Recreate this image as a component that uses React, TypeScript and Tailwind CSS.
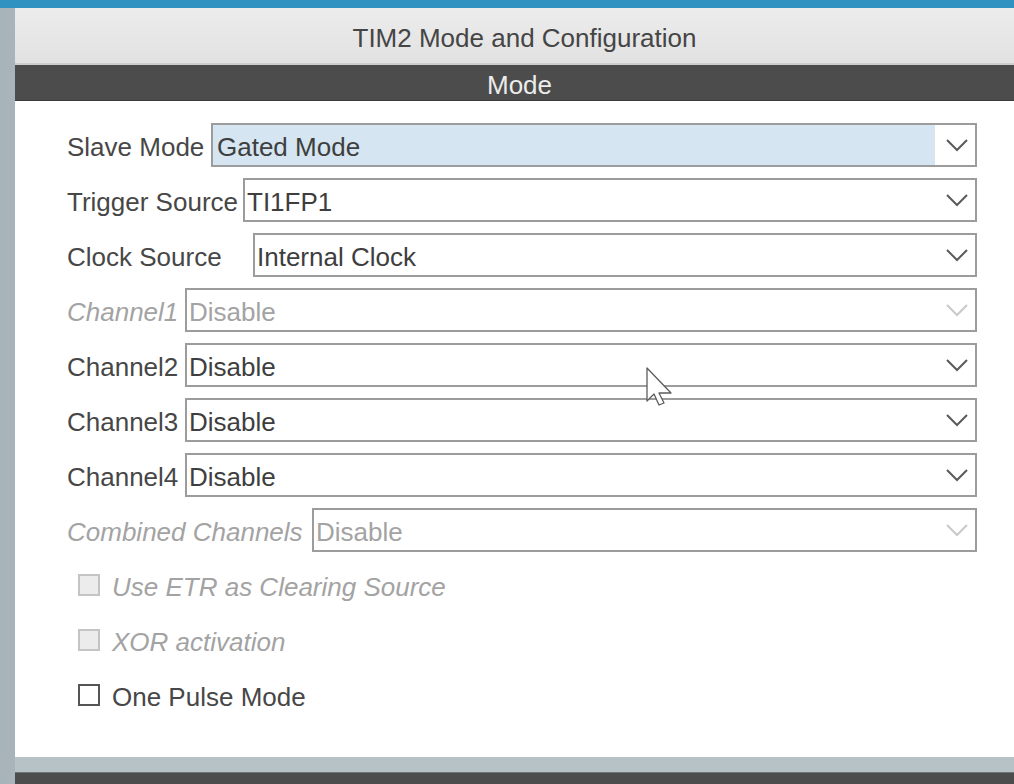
import React from 'react';

type Row = {
  label: string;
  value: string;
  labelW: string;
  disabled?: boolean;
  active?: boolean;
};

const rows: Row[] = [
  { label: 'Slave Mode', value: 'Gated Mode', labelW: 'w-[144px]', active: true },
  { label: 'Trigger Source', value: 'TI1FP1', labelW: 'w-[176px]' },
  { label: 'Clock Source', value: 'Internal Clock', labelW: 'w-[186px]' },
  { label: 'Channel1', value: 'Disable', labelW: 'w-[118px]', disabled: true },
  { label: 'Channel2', value: 'Disable', labelW: 'w-[118px]' },
  { label: 'Channel3', value: 'Disable', labelW: 'w-[118px]' },
  { label: 'Channel4', value: 'Disable', labelW: 'w-[118px]' },
  { label: 'Combined Channels', value: 'Disable', labelW: 'w-[245px]', disabled: true },
];

const checks = [
  { label: 'Use ETR as Clearing Source', disabled: true },
  { label: 'XOR activation', disabled: true },
  { label: 'One Pulse Mode', disabled: false },
];

function Chevron({ disabled }: { disabled?: boolean }) {
  return (
    <svg width="24" height="14" viewBox="0 0 24 14" fill="none">
      <polyline
        points="2,2 12,12 22,2"
        stroke={disabled ? '#c9c9c9' : '#5a5a5a'}
        strokeWidth="2"
      />
    </svg>
  );
}

function SelectRow({ row }: { row: Row }) {
  return (
    <div className="flex h-[44px] items-center">
      <div
        className={
          row.disabled
            ? `${row.labelW} shrink-0 pt-[4px] italic text-[#a3a3a3]`
            : `${row.labelW} shrink-0 pt-[4px] text-[#474747]`
        }
      >
        {row.label}
      </div>
      <div className="flex h-full flex-1 items-stretch border-2 border-[#9c9c9c] bg-white">
        <div
          className={
            row.active
              ? 'flex flex-1 items-center bg-[#d5e5f1] pl-[4px] pt-[4px] text-[#3e3e3e]'
              : row.disabled
                ? 'flex flex-1 items-center pl-[2px] pt-[4px] text-[#a3a3a3]'
                : 'flex flex-1 items-center pl-[2px] pt-[4px] text-[#3e3e3e]'
          }
        >
          {row.value}
        </div>
        <div className="flex w-[40px] items-center justify-end pr-[6px]">
          <Chevron disabled={row.disabled} />
        </div>
      </div>
    </div>
  );
}

function CheckRow({ label, disabled }: { label: string; disabled: boolean }) {
  return (
    <div className="flex h-[44px] items-center pl-[11px]">
      <div
        className={
          disabled
            ? 'h-[22px] w-[22px] border-2 border-[#c4c4c4] bg-[#ececec]'
            : 'h-[22px] w-[22px] border-2 border-[#555555] bg-white'
        }
      />
      <span
        className={
          disabled
            ? 'ml-[12px] pt-[4px] italic text-[#a3a3a3]'
            : 'ml-[12px] pt-[4px] text-[#474747]'
        }
      >
        {label}
      </span>
    </div>
  );
}

export default function App() {
  return (
    <div className="relative flex h-[784px] w-[1014px] flex-col overflow-hidden bg-[#a9b4ba] font-['Liberation_Sans',Arial,sans-serif] text-[26px]">
      <div className="h-[8px] shrink-0 bg-[#2f92c1]" />
      <div className="flex flex-1 flex-col pl-[15px]">
        <div className="flex h-[57px] shrink-0 items-center justify-center border-b-2 border-[#cfcfcf] bg-gradient-to-b from-[#ececec] to-[#e2e2e2] pl-[20px] pt-[6px] text-[#454545]">
          TIM2 Mode and Configuration
        </div>
        <div className="flex h-[36px] shrink-0 items-center justify-center border-b border-[#3a3a3a] bg-[#4b4c4b] pl-[10px] pt-[5px] text-[#ececec]">
          Mode
        </div>
        <div className="flex h-[656px] shrink-0 flex-col gap-[11px] bg-white pb-[20px] pl-[52px] pr-[37px] pt-[22px]">
          {rows.map((r) => (
            <SelectRow key={r.label} row={r} />
          ))}
          {checks.map((c) => (
            <CheckRow key={c.label} label={c.label} disabled={c.disabled} />
          ))}
        </div>
        <div className="h-[15px] shrink-0 bg-[#b6c2c6]" />
        <div className="flex flex-1 items-start justify-center overflow-hidden border-t border-[#6f7476] bg-[#4b4c4b] pl-[20px] text-[#dcdcdc]">
          <span className="mt-[9px]">Configuration</span>
        </div>
      </div>
      <svg
        className="absolute left-[646px] top-[367px]"
        width="28"
        height="40"
        viewBox="0 0 28 40"
        fill="none"
      >
        <path
          d="M1 1 L1 34 L8 27 L13 38 L18 36 L13 26 L25 26 Z"
          fill="white"
          stroke="#5c5c5c"
          strokeWidth="1.3"
          strokeLinejoin="round"
        />
      </svg>
    </div>
  );
}
